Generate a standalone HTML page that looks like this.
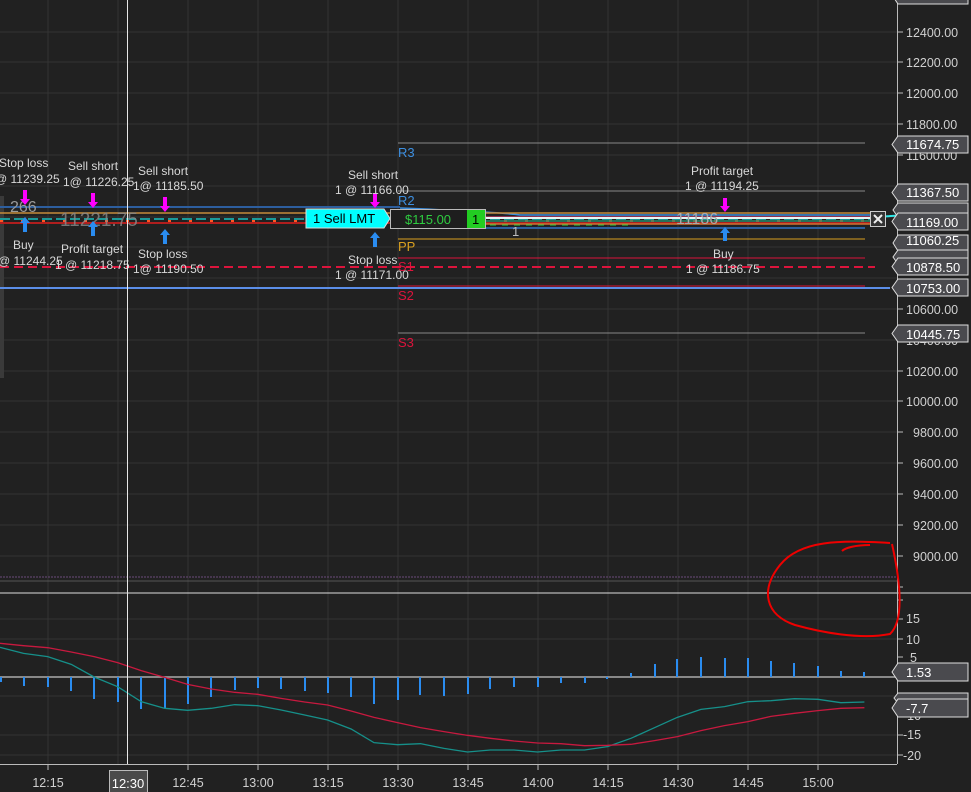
<!DOCTYPE html>
<html><head><meta charset="utf-8"><style>
html,body{margin:0;padding:0;background:#212121;overflow:hidden}
svg{display:block}
text{font-family:"Liberation Sans",sans-serif}
</style></head><body>
<svg width="971" height="792" viewBox="0 0 971 792" xmlns="http://www.w3.org/2000/svg">
<rect width="971" height="792" fill="#212121"/>
<g stroke="#343434" stroke-width="1">
<line x1="48" y1="0" x2="48" y2="764"/><line x1="118" y1="0" x2="118" y2="764"/><line x1="188" y1="0" x2="188" y2="764"/><line x1="258" y1="0" x2="258" y2="764"/><line x1="328" y1="0" x2="328" y2="764"/><line x1="398" y1="0" x2="398" y2="764"/><line x1="468" y1="0" x2="468" y2="764"/><line x1="538" y1="0" x2="538" y2="764"/><line x1="608" y1="0" x2="608" y2="764"/><line x1="678" y1="0" x2="678" y2="764"/><line x1="748" y1="0" x2="748" y2="764"/><line x1="818" y1="0" x2="818" y2="764"/>
<line x1="0" y1="32" x2="897" y2="32"/><line x1="0" y1="62" x2="897" y2="62"/><line x1="0" y1="93" x2="897" y2="93"/><line x1="0" y1="124" x2="897" y2="124"/><line x1="0" y1="155" x2="897" y2="155"/><line x1="0" y1="186" x2="897" y2="186"/><line x1="0" y1="217" x2="897" y2="217"/><line x1="0" y1="247" x2="897" y2="247"/><line x1="0" y1="278" x2="897" y2="278"/><line x1="0" y1="309" x2="897" y2="309"/><line x1="0" y1="340" x2="897" y2="340"/><line x1="0" y1="371" x2="897" y2="371"/><line x1="0" y1="401" x2="897" y2="401"/><line x1="0" y1="432" x2="897" y2="432"/><line x1="0" y1="463" x2="897" y2="463"/><line x1="0" y1="494" x2="897" y2="494"/><line x1="0" y1="525" x2="897" y2="525"/><line x1="0" y1="556" x2="897" y2="556"/>
<line x1="0" y1="619" x2="897" y2="619"/><line x1="0" y1="639" x2="897" y2="639"/><line x1="0" y1="696" x2="897" y2="696"/><line x1="0" y1="735" x2="897" y2="735"/><line x1="0" y1="755" x2="897" y2="755"/>
</g>
<line x1="0" y1="577" x2="897" y2="577" stroke="#6a4a7a" stroke-dasharray="2,1"/>
<line x1="0" y1="581" x2="897" y2="581" stroke="#555"/>
<rect x="0" y="196" width="4" height="182" fill="#3a3a3a"/>
<line x1="398" y1="143" x2="865" y2="143" stroke="#888"/>
<line x1="398" y1="191" x2="865" y2="191" stroke="#888"/>
<line x1="398" y1="239" x2="865" y2="239" stroke="#d9a020"/>
<line x1="398" y1="258" x2="865" y2="258" stroke="#dc143c"/>
<line x1="398" y1="286" x2="865" y2="286" stroke="#dc143c"/>
<line x1="398" y1="333" x2="865" y2="333" stroke="#888"/>
<g font-size="13">
<text x="398" y="157" fill="#3d8fe0">R3</text>
<text x="398" y="205" fill="#3d8fe0">R2</text>
<text x="398" y="251" fill="#d9a020">PP</text>
<text x="398" y="271" fill="#dc143c">S1</text>
<text x="398" y="300" fill="#dc143c">S2</text>
<text x="398" y="347" fill="#dc143c">S3</text>
</g>
<line x1="0" y1="207" x2="400" y2="207" stroke="#2d5e9e" stroke-width="2"/>
<path d="M400 208 Q500 212 520 215 L875 215" stroke="#3d8fe0" fill="none" stroke-width="1.5"/>
<line x1="0" y1="213" x2="875" y2="213" stroke="#c68a3a" stroke-width="1.5"/>
<line x1="0" y1="219" x2="875" y2="219" stroke="#1a9a9a" stroke-width="2" stroke-dasharray="10,4"/>
<line x1="0" y1="221" x2="875" y2="221" stroke="#ff5522" stroke-width="2" stroke-dasharray="3,18"/>
<line x1="0" y1="223" x2="875" y2="223" stroke="#b01e1e" stroke-width="2"/>
<line x1="486" y1="217" x2="875" y2="217" stroke="#ff4080"/>
<line x1="486" y1="218" x2="875" y2="218" stroke="#e8f6f6" stroke-width="2"/>
<line x1="486" y1="221" x2="875" y2="221" stroke="#2a8a6a" stroke-width="1.5"/>
<line x1="486" y1="224" x2="875" y2="224" stroke="#d07030" stroke-width="1.5"/>
<line x1="398" y1="228" x2="865" y2="228" stroke="#2d5e9e" stroke-width="2"/>
<line x1="490" y1="225" x2="630" y2="225" stroke="#2ecc40" stroke-dasharray="6,6"/>
<line x1="876" y1="217" x2="971" y2="211" stroke="#30e8e8" stroke-width="2"/>
<line x1="0" y1="267" x2="875" y2="267" stroke="#dc143c" stroke-width="2" stroke-dasharray="9,5"/>
<line x1="0" y1="288" x2="890" y2="288" stroke="#5b8ee8" stroke-width="2"/>
<text x="60" y="226" fill="#8a8a8a" font-size="19" opacity="0.8">11221.75</text>
<text x="10" y="212" fill="#9a9a9a" font-size="16">266</text>
<text x="676" y="224" fill="#aaa" font-size="16">11186</text>
<text x="512" y="236" fill="#bbb" font-size="13">1</text>
<g fill="#ff00ff">
<path d="M23 190h4v9h3l-5 6-5-6h3z"/><path d="M91 193h4v9h3l-5 6-5-6h3z"/><path d="M163 197h4v9h3l-5 6-5-6h3z"/><path d="M373 193h4v9h3l-5 6-5-6h3z"/><path d="M723 198h4v8h3l-5 6-5-6h3z"/>
</g>
<g fill="#2a8cf0">
<path d="M23 232h4v-9h3l-5-6-5 6h3z"/><path d="M91 236h4v-9h3l-5-6-5 6h3z"/><path d="M163 244h4v-9h3l-5-6-5 6h3z"/><path d="M373 247h4v-9h3l-5-6-5 6h3z"/><path d="M723 241h4v-8h3l-5-6-5 6h3z"/>
</g>
<g fill="#d8d8d8" font-size="12">
<text x="-1" y="167">Stop loss</text><text x="-5" y="183">@ 11239.25</text>
<text x="68" y="170">Sell short</text><text x="63" y="186">1@ 11226.25</text>
<text x="138" y="175">Sell short</text><text x="133" y="190">1@ 11185.50</text>
<text x="13" y="249">Buy</text><text x="-2" y="265">@ 11244.25</text>
<text x="61" y="253">Profit target</text><text x="55" y="269">1 @ 11218.75</text>
<text x="138" y="258">Stop loss</text><text x="133" y="273">1@ 11190.50</text>
<text x="348" y="179">Sell short</text><text x="335" y="194">1 @ 11166.00</text>
<text x="348" y="264">Stop loss</text><text x="335" y="279">1 @ 11171.00</text>
<text x="691" y="175">Profit target</text><text x="685" y="190">1 @ 11194.25</text>
<text x="713" y="258">Buy</text><text x="686" y="273">1 @ 11186.75</text>
</g>
<path d="M306 209h78l6 9.5-6 9.5h-78z" fill="#00ffff" stroke="#ddd"/>
<text x="313" y="223" font-size="13" fill="#000">1  Sell LMT</text>
<rect x="390.5" y="209.5" width="95" height="19" fill="#1e1e1e" stroke="#bbb"/>
<text x="405" y="224" font-size="13" fill="#2ecc40">$115.00</text>
<rect x="467" y="210" width="18" height="18" fill="#22cc22"/>
<text x="472" y="224" font-size="13" fill="#000">1</text>
<rect x="870.5" y="211.5" width="15" height="15" fill="#333" stroke="#ccc"/>
<path d="M874 215l8 8M882 215l-8 8" stroke="#eee" stroke-width="2"/>
<line x1="0" y1="593" x2="971" y2="593" stroke="#ddd"/>
<line x1="0" y1="677" x2="897" y2="677" stroke="#aaa" stroke-width="1.5"/>
<g stroke="#2a8cf0" stroke-width="2">
<line x1="1" y1="677" x2="1" y2="682"/><line x1="24" y1="677" x2="24" y2="686"/><line x1="48" y1="677" x2="48" y2="687"/><line x1="71" y1="677" x2="71" y2="691"/><line x1="94" y1="677" x2="94" y2="699"/><line x1="118" y1="677" x2="118" y2="702"/><line x1="141" y1="677" x2="141" y2="709"/><line x1="165" y1="677" x2="165" y2="708"/><line x1="188" y1="677" x2="188" y2="704"/><line x1="211" y1="677" x2="211" y2="697"/><line x1="235" y1="677" x2="235" y2="690"/><line x1="258" y1="677" x2="258" y2="688"/><line x1="281" y1="677" x2="281" y2="689"/><line x1="305" y1="677" x2="305" y2="691"/><line x1="328" y1="677" x2="328" y2="693"/><line x1="351" y1="677" x2="351" y2="697"/><line x1="374" y1="677" x2="374" y2="704"/><line x1="398" y1="677" x2="398" y2="700"/><line x1="420" y1="677" x2="420" y2="695"/><line x1="444" y1="677" x2="444" y2="696"/><line x1="468" y1="677" x2="468" y2="694"/><line x1="490" y1="677" x2="490" y2="689"/><line x1="514" y1="677" x2="514" y2="687"/><line x1="538" y1="677" x2="538" y2="687"/><line x1="561" y1="677" x2="561" y2="683"/><line x1="585" y1="677" x2="585" y2="683"/><line x1="607" y1="677" x2="607" y2="679"/><line x1="631" y1="677" x2="631" y2="673"/><line x1="655" y1="677" x2="655" y2="664"/><line x1="677" y1="677" x2="677" y2="659"/><line x1="701" y1="677" x2="701" y2="657"/><line x1="725" y1="677" x2="725" y2="658"/><line x1="748" y1="677" x2="748" y2="658"/><line x1="771" y1="677" x2="771" y2="661"/><line x1="794" y1="677" x2="794" y2="663"/><line x1="818" y1="677" x2="818" y2="666"/><line x1="841" y1="677" x2="841" y2="671"/><line x1="864" y1="677" x2="864" y2="672"/>
</g>
<g transform="translate(0,580) scale(0.6192,0.33333)">
<polyline vector-effect="non-scaling-stroke" fill="none" stroke="#16908a" stroke-width="1.3" points="0,202 38,220 77,230 115,253 152,291 190,320 228,365 266,385 303,391 341,385 379,374 416,377 454,390 492,405 529,420 567,447 604,488 642,494 679,491 717,505 755,516 792,510 830,510 868,516 906,510 944,510 981,500 1019,475 1057,443 1094,412 1132,388 1170,380 1208,365 1245,362 1283,356 1321,358 1358,368 1396,366"/>
<polyline vector-effect="non-scaling-stroke" fill="none" stroke="#c8193f" stroke-width="1.3" points="0,190 38,197 77,203 115,216 152,230 190,248 228,272 266,292 303,313 341,327 379,337 416,343 454,355 492,366 529,375 567,393 604,412 642,428 679,443 717,455 755,466 792,475 830,483 868,489 906,491 944,497 981,496 1019,493 1057,482 1094,470 1132,452 1170,437 1208,425 1245,409 1283,400 1321,392 1358,385 1396,383"/>
</g>
<line x1="127.5" y1="0" x2="127.5" y2="764" stroke="#e8e8e8"/>
<rect x="898" y="0" width="73" height="792" fill="#212121"/>
<line x1="0" y1="593" x2="971" y2="593" stroke="#ddd"/>
<line x1="897.5" y1="0" x2="897.5" y2="764" stroke="#bbb"/>
<line x1="0" y1="764.5" x2="897" y2="764.5" stroke="#bbb"/>
<g stroke="#bbb">
<line x1="898" y1="32" x2="903" y2="32"/><line x1="898" y1="62" x2="903" y2="62"/><line x1="898" y1="93" x2="903" y2="93"/><line x1="898" y1="124" x2="903" y2="124"/><line x1="898" y1="155" x2="903" y2="155"/><line x1="898" y1="309" x2="903" y2="309"/><line x1="898" y1="340" x2="903" y2="340"/><line x1="898" y1="371" x2="903" y2="371"/><line x1="898" y1="401" x2="903" y2="401"/><line x1="898" y1="432" x2="903" y2="432"/><line x1="898" y1="463" x2="903" y2="463"/><line x1="898" y1="494" x2="903" y2="494"/><line x1="898" y1="525" x2="903" y2="525"/><line x1="898" y1="556" x2="903" y2="556"/>
<line x1="898" y1="619" x2="903" y2="619"/><line x1="898" y1="639" x2="903" y2="639"/><line x1="898" y1="657" x2="903" y2="657"/><line x1="898" y1="735" x2="903" y2="735"/><line x1="898" y1="755" x2="903" y2="755"/><line x1="898" y1="587" x2="903" y2="587"/><line x1="898" y1="600" x2="903" y2="600"/>
<line x1="48" y1="765" x2="48" y2="770"/><line x1="188" y1="765" x2="188" y2="770"/><line x1="258" y1="765" x2="258" y2="770"/><line x1="328" y1="765" x2="328" y2="770"/><line x1="398" y1="765" x2="398" y2="770"/><line x1="468" y1="765" x2="468" y2="770"/><line x1="538" y1="765" x2="538" y2="770"/><line x1="608" y1="765" x2="608" y2="770"/><line x1="678" y1="765" x2="678" y2="770"/><line x1="748" y1="765" x2="748" y2="770"/><line x1="818" y1="765" x2="818" y2="770"/>
</g>
<g fill="#d0d0d0" font-size="12.5">
<text x="906" y="37">12400.00</text><text x="906" y="67">12200.00</text><text x="906" y="98">12000.00</text><text x="906" y="129">11800.00</text><text x="906" y="160">11600.00</text><text x="906" y="314">10600.00</text><text x="906" y="345">10400.00</text><text x="906" y="376">10200.00</text><text x="906" y="406">10000.00</text><text x="913" y="437">9800.00</text><text x="913" y="468">9600.00</text><text x="913" y="499">9400.00</text><text x="913" y="530">9200.00</text><text x="913" y="561">9000.00</text>
<text x="906" y="623">15</text><text x="906" y="644">10</text><text x="910" y="662">5</text><text x="903" y="739">-15</text><text x="903" y="760">-20</text><text x="903" y="720">-10</text>
</g>
<g fill="#d0d0d0" font-size="12.5" text-anchor="middle">
<text x="48" y="787">12:15</text><text x="188" y="787">12:45</text><text x="258" y="787">13:00</text><text x="328" y="787">13:15</text><text x="398" y="787">13:30</text><text x="468" y="787">13:45</text><text x="538" y="787">14:00</text><text x="608" y="787">14:15</text><text x="678" y="787">14:30</text><text x="748" y="787">14:45</text><text x="818" y="787">15:00</text>
</g>
<rect x="109.5" y="770.5" width="38" height="22" fill="#4a4a4a" stroke="#bbb"/>
<text x="128" y="788" fill="#fff" font-size="13" text-anchor="middle">12:30</text>
<g font-size="13" fill="#fff">
<path d="M898 -9h70v13h-70l-4-6z" fill="#4a4a4e" stroke="#ddd"/>
<path d="M898 235h70v16h-70l-5-8z" fill="#4a4a4e" stroke="#ddd"/><text x="906" y="245">11060.25</text>
<path d="M898 250h70v14h-70l-5-7z" fill="#4a4a4e" stroke="#ddd"/>
<path d="M898 136h70v17h-70l-6-8.5z" fill="#4a4a4e" stroke="#ddd"/><text x="906" y="149">11674.75</text>
<path d="M898 184h70v17h-70l-6-8.5z" fill="#4a4a4e" stroke="#ddd"/><text x="906" y="197">11367.50</text>
<path d="M898 203h70v14h-70l-5-7z" fill="#4a4a4e" stroke="#ddd"/>
<path d="M898 213h70v17h-70l-6-8.5z" fill="#4a4a4e" stroke="#ddd"/><text x="906" y="227">11169.00</text>
<path d="M898 258h70v17h-70l-6-8.5z" fill="#4a4a4e" stroke="#ddd"/><text x="906" y="272">10878.50</text>
<path d="M898 279h70v17h-70l-6-8.5z" fill="#4a4a4e" stroke="#ddd"/><text x="906" y="293">10753.00</text>
<path d="M898 325h70v17h-70l-6-8.5z" fill="#4a4a4e" stroke="#ddd"/><text x="906" y="339">10445.75</text>
<path d="M898 663h70v18h-70l-6-9z" fill="#4a4a4e" stroke="#ddd"/><text x="906" y="677">1.53</text>
<path d="M898 693h70v10h-70l-4-5z" fill="#4a4a4e" stroke="#ddd"/>
<path d="M898 699h70v18h-70l-6-9z" fill="#4a4a4e" stroke="#ddd"/><text x="906" y="713">-7.7</text>
</g>
<path d="M890 543 C840 540 800 540 780 565 C760 590 765 615 795 625 C820 632 860 640 890 634 C905 620 900 580 892 544 M870 545 C855 545 845 548 842 551" fill="none" stroke="#ee0000" stroke-width="2"/>
</svg>
</body></html>
